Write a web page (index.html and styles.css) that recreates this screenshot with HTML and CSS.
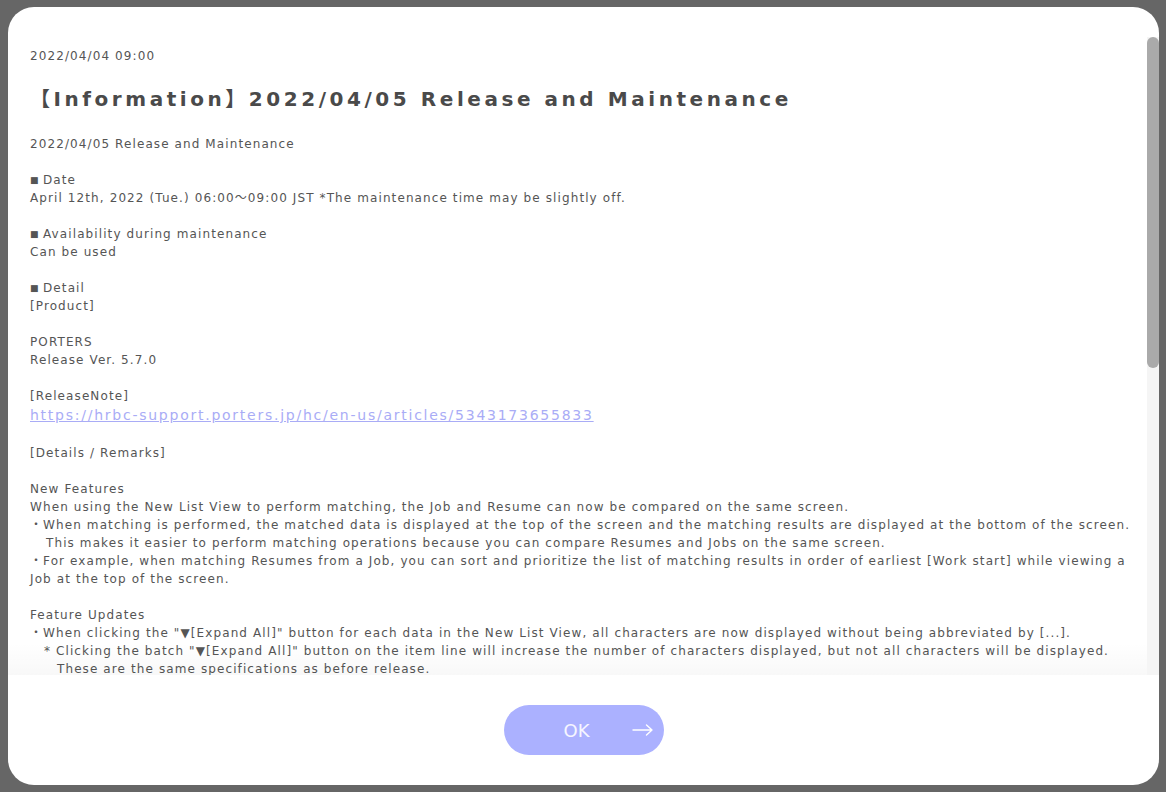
FILE: index.html
```html
<!DOCTYPE html>
<html lang="en">
<head>
<meta charset="utf-8">
<title>Information</title>
<link rel="stylesheet" href="styles.css">
</head>
<body>
<div class="modal">
  <div class="scroll-wrap">
    <div class="scroll">
      <p class="date">2022/04/04 09:00</p>
      <h1 class="title">【Information】2022/04/05 Release and Maintenance</h1>
      <p>2022/04/05 Release and Maintenance</p>
      <p><span class="sq">■</span>Date<br>April 12th, 2022 (Tue.) 06:00～09:00 JST *The maintenance time may be slightly off.</p>
      <p><span class="sq">■</span>Availability during maintenance<br>Can be used</p>
      <p><span class="sq">■</span>Detail<br>[Product]</p>
      <p>PORTERS<br>Release Ver. 5.7.0</p>
      <p>[ReleaseNote]<br><a class="link" href="#">https://hrbc-support.porters.jp/hc/en-us/articles/5343173655833</a></p>
      <p>[Details / Remarks]</p>
      <p>New Features<br>When using the New List View to perform matching, the Job and Resume can now be compared on the same screen.<br>・When matching is performed, the matched data is displayed at the top of the screen and the matching results are displayed at the bottom of the screen.<br><span class="ind1">This makes it easier to perform matching operations because you can compare Resumes and Jobs on the same screen.</span><br>・For example, when matching Resumes from a Job, you can sort and prioritize the list of matching results in order of earliest [Work start] while viewing a<br>Job at the top of the screen.</p>
      <p>Feature Updates<br>・When clicking the "▼[Expand All]" button for each data in the New List View, all characters are now displayed without being abbreviated by [...].<br><span class="ind2">* Clicking the batch "▼[Expand All]" button on the item line will increase the number of characters displayed, but not all characters will be displayed.</span><br><span class="ind3">These are the same specifications as before release.</span></p>
      <p>・The display width of each item in the New List View can now be changed by dragging the item line.<br>・The items displayed in the New List View are now saved for each user.</p>
      <p>Specification Changes<br>・The maximum number of data that can be displayed at one time in the New List View has been changed from 100 to 200.<br>・The default sort order of the matching results has been changed to [Last updated] (descending order).</p>
      <p>Bug Fixes<br>・Fixed an issue where the sort order was not retained when returning from the detail screen to the New List View.<br>・Fixed an issue where some items were not displayed correctly when exporting a CSV file.<br>・Fixed an issue where the search conditions were cleared when switching tabs on the matching screen.<br>・Fixed an issue where an error occurred when registering a Process from the Resume detail screen.</p>
      <p>[Notes]<br>・After the release, please clear the browser cache if the screen is not displayed correctly.<br>・Some functions may not be available during the maintenance.</p>
      <p>[Target]<br>All customers using PORTERS</p>
      <p>[Inquiries]<br>If you have any questions, please contact us from the link below.<br>PORTERS Support Desk<br><a class="link" href="#">https://hrbc-support.porters.jp/hc/en-us/requests/new</a></p>
      <p>We apologize for any inconvenience and appreciate your understanding.<br>Thank you for continuing to use PORTERS.</p>
      <p>[Next release]<br>Scheduled for May 2022. Details will be announced on this page.</p>
    </div>
    <div class="scrollbar"><div class="thumb"></div></div>
  </div>
  <div class="footer">
    <button class="ok" type="button"><span class="ok-label">OK</span><svg class="ok-arrow" width="22" height="12" viewBox="0 0 22 12"><path d="M1 6H20M14.5 1L20 6L14.5 11" fill="none" stroke="#ffffff" stroke-width="1.4" stroke-linecap="round" stroke-linejoin="round"/></svg></button>
  </div>
</div>
</body>
</html>
```
FILE: styles.css
```css
html, body {
  margin: 0;
  padding: 0;
}

body {
  background: #666666;
  font-family: "DejaVu Sans", "Noto Sans CJK JP", sans-serif;
  width: 1166px;
  height: 792px;
  overflow: hidden;
}

.modal {
  margin: 7px 0 0 8px;
  width: 1151px;
  height: 778px;
  background: #ffffff;
  border-radius: 26px;
  display: flex;
  flex-direction: column;
  overflow: hidden;
}

.scroll-wrap {
  flex: 1;
  min-height: 0;
  margin-top: 30px;
  position: relative;
  display: flex;
}

.scroll-wrap::after {
  content: "";
  position: absolute;
  left: 0;
  right: 12px;
  bottom: 0;
  height: 32px;
  background: linear-gradient(rgba(0, 0, 0, 0), rgba(0, 0, 0, 0.028));
  pointer-events: none;
}

.scroll {
  flex: 1;
  overflow-y: scroll;
  overflow-x: hidden;
  scrollbar-width: none;
  padding: 10px 12px 30px 22px;
  color: #555555;
  font-size: 12px;
  line-height: 18px;
  letter-spacing: 1.1px;
  white-space: nowrap;
}

.scroll::-webkit-scrollbar {
  display: none;
}

.scrollbar {
  position: absolute;
  top: 0;
  right: 0;
  bottom: 0;
  width: 12px;
  background: #f5f5f5;
}

.thumb {
  height: 331px;
  border-radius: 6px;
  background: #aaaaaa;
}

.scroll p {
  margin: 0 0 18px;
}

.scroll p.date {
  margin: 0 0 20px;
}

.title {
  margin: 0 0 22px;
  font-size: 20px;
  line-height: 28px;
  letter-spacing: 3.55px;
  font-weight: bold;
  color: #4a4a4a;
}

.sq {
  display: inline-block;
  width: 13px;
  font-size: 9px;
  color: #555555;
  letter-spacing: 0;
  vertical-align: top;
}

.link {
  display: inline-block;
  font-size: 14px;
  line-height: 21px;
  letter-spacing: 1.75px;
  color: #a9acf6;
  text-decoration: underline;
}

.ind1 {
  display: inline-block;
  padding-left: 16px;
}

.ind2 {
  display: inline-block;
  padding-left: 14px;
}

.ind3 {
  display: inline-block;
  padding-left: 27px;
}

.footer {
  flex: none;
  height: 110px;
  display: flex;
  align-items: center;
  justify-content: center;
}

.ok {
  position: relative;
  width: 160px;
  height: 50px;
  border: none;
  border-radius: 25px;
  background: #abb1ff;
  color: #f6f6ff;
  font-family: "DejaVu Sans", sans-serif;
  font-size: 18px;
  display: flex;
  align-items: center;
  justify-content: center;
  padding: 0 14px 0 0;
  cursor: pointer;
}

.ok-arrow {
  position: absolute;
  right: 10px;
  top: 19px;
}
```
